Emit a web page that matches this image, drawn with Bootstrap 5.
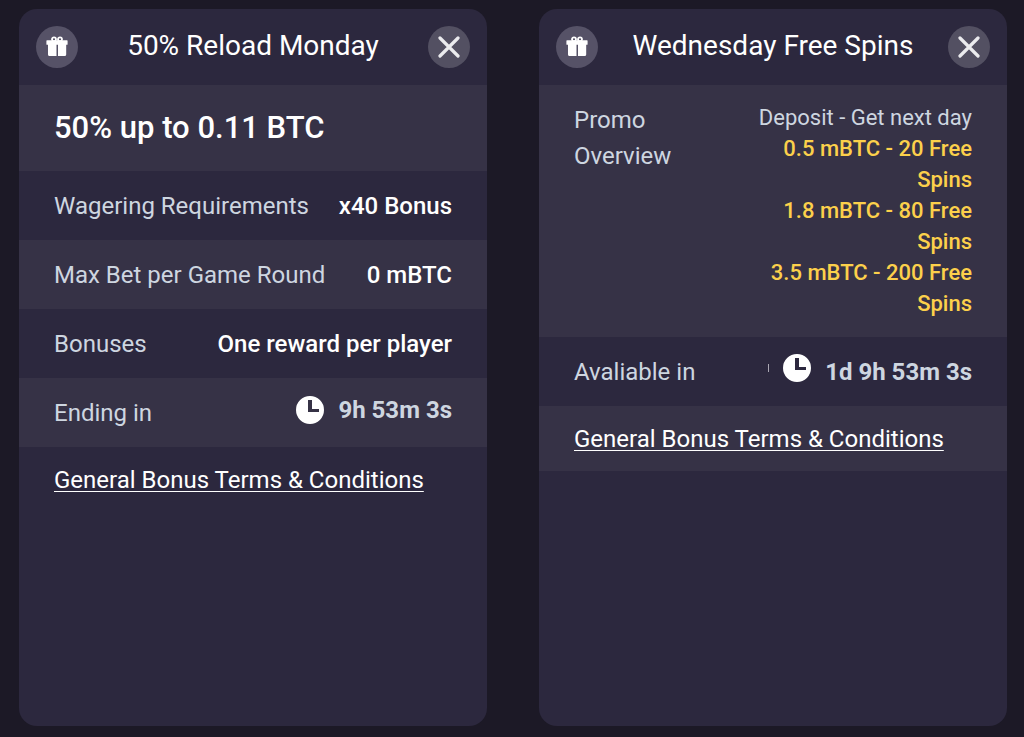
<!DOCTYPE html>
<html lang="en">
<head>
<meta charset="utf-8">
<meta name="viewport" content="width=device-width, initial-scale=1">
<title>Bonuses</title>
<link href="https://cdn.jsdelivr.net/npm/bootstrap@5.3.0/dist/css/bootstrap.min.css" rel="stylesheet">
<style>
  body { background: #1c1926; color: #fff; font-family: Roboto, sans-serif; font-size: 24px; line-height: 36px; }
  .promo-grid { display: grid; grid-template-columns: repeat(auto-fit, minmax(400px, 1fr)); gap: 52px; min-height: 100vh; padding: 9px 17px 11px 19px; }
  .promo { background: #2c283e; border-radius: 18px; overflow: hidden; }
  .promo-head { min-height: 76px; padding: 0 17px; }
  .promo-title { font-size: 28px; line-height: 36px; font-weight: 400; padding-bottom: 2px; }
  .round-icon { width: 42px; height: 42px; background: #565267; color: #fff; }
  .close-icon { background: #535062; color: #ebebee; }
  .promo-row { min-height: 69px; padding: 14px 35px; color: #ced6e0; }
  .promo-row:nth-child(even) { background: #363246; }
  .offer { min-height: 86px; font-size: 31px; font-weight: 500; color: #fff; }
  .strong-value { font-weight: 500; color: #fff; }
  .timer { gap: 14px; font-weight: 700; line-height: 28px; }
  .timer-raised { padding-bottom: 6px; }
  .overview { min-height: 252px; padding-top: 17px; padding-bottom: 17px; }
  .free-spins { width: 220px; font-size: 22px; line-height: 31px; }
  .free-spins strong { font-weight: 500; color: #fcd04b; }
  .terms { min-height: 65px; }
  .terms a { color: #fff; text-decoration-thickness: 1px; text-underline-offset: 3px; }
  .divider-tick { width: 1px; height: 8px; margin-bottom: 8px; background: #aaa7b3; }
</style>
</head>
<body>
<svg class="d-none" aria-hidden="true">
  <symbol id="gift" viewBox="0 0 22 22">
    <path fill="currentColor" d="M1 4.300h20a.6.6 0 0 1 .6.6v3.300a.6.6 0 0 1-.6.6H20.200v9.700a1.600 1.600 0 0 1-1.600 1.600H12V8.800h-1.500V20H3.600a1.600 1.600 0 0 1-1.600-1.600V8.800H1a.6.6 0 0 1-.6-.6V4.900a.6.6 0 0 1 .6-.6z"/>
    <circle cx="8" cy="3.300" r="2" fill="none" stroke="currentColor" stroke-width="1.800"/>
    <circle cx="14" cy="3.300" r="2" fill="none" stroke="currentColor" stroke-width="1.800"/>
  </symbol>
  <symbol id="close" viewBox="0 0 22 22">
    <path d="M2 2l18 18M20 2L2 20" fill="none" stroke="currentColor" stroke-width="3.200" stroke-linecap="round"/>
  </symbol>
  <symbol id="clock" viewBox="0 0 28 28">
    <path fill="currentColor" fill-rule="evenodd" d="M14 0a14 14 0 1 1 0 28a14 14 0 0 1 0-28zM12 4v12h11v-3h-7V4z"/>
  </symbol>
</svg>

<main class="promo-grid">
  <section class="promo">
    <header class="promo-head d-flex align-items-center justify-content-between">
      <span class="round-icon rounded-circle d-flex align-items-center justify-content-center"><svg width="22" height="22" aria-hidden="true"><use href="#gift"/></svg></span>
      <h2 class="promo-title mb-0">50% Reload Monday</h2>
      <button type="button" class="round-icon close-icon rounded-circle border-0 p-0 d-flex align-items-center justify-content-center" aria-label="Close"><svg width="22" height="22" aria-hidden="true"><use href="#close"/></svg></button>
    </header>
    <div class="promo-row offer d-flex align-items-center">50% up to 0.11 BTC</div>
    <div class="promo-row d-flex align-items-center justify-content-between"><span>Wagering Requirements</span><span class="strong-value">x40 Bonus</span></div>
    <div class="promo-row d-flex align-items-center justify-content-between"><span>Max Bet per Game Round</span><span class="strong-value">0 mBTC</span></div>
    <div class="promo-row d-flex align-items-center justify-content-between"><span>Bonuses</span><span class="strong-value">One reward per player</span></div>
    <div class="promo-row d-flex align-items-center justify-content-between"><span>Ending in</span>
      <span class="timer timer-raised d-flex align-items-center"><svg class="text-white" width="28" height="28" aria-hidden="true"><use href="#clock"/></svg>9h 53m 3s</span></div>
    <div class="promo-row terms d-flex align-items-center"><a href="#">General Bonus Terms &amp; Conditions</a></div>
  </section>

  <section class="promo">
    <header class="promo-head d-flex align-items-center justify-content-between">
      <span class="round-icon rounded-circle d-flex align-items-center justify-content-center"><svg width="22" height="22" aria-hidden="true"><use href="#gift"/></svg></span>
      <h2 class="promo-title mb-0">Wednesday Free Spins</h2>
      <button type="button" class="round-icon close-icon rounded-circle border-0 p-0 d-flex align-items-center justify-content-center" aria-label="Close"><svg width="22" height="22" aria-hidden="true"><use href="#close"/></svg></button>
    </header>
    <div class="promo-row overview d-flex justify-content-between"><span>Promo<br>Overview</span>
      <div class="free-spins text-end">Deposit - Get next day<br><strong>0.5 mBTC - 20 Free Spins<br>1.8 mBTC - 80 Free Spins<br>3.5 mBTC - 200 Free Spins</strong></div></div>
    <div class="promo-row d-flex align-items-center justify-content-between"><span>Avaliable in</span>
      <span class="timer d-flex align-items-center"><i class="divider-tick"></i><svg class="text-white mb-2" width="28" height="28" aria-hidden="true"><use href="#clock"/></svg>1d 9h 53m 3s</span></div>
    <div class="promo-row terms d-flex align-items-center"><a href="#">General Bonus Terms &amp; Conditions</a></div>
  </section>
</main>
<script src="https://cdn.jsdelivr.net/npm/bootstrap@5.3.0/dist/js/bootstrap.bundle.min.js"></script>
</body>
</html>
